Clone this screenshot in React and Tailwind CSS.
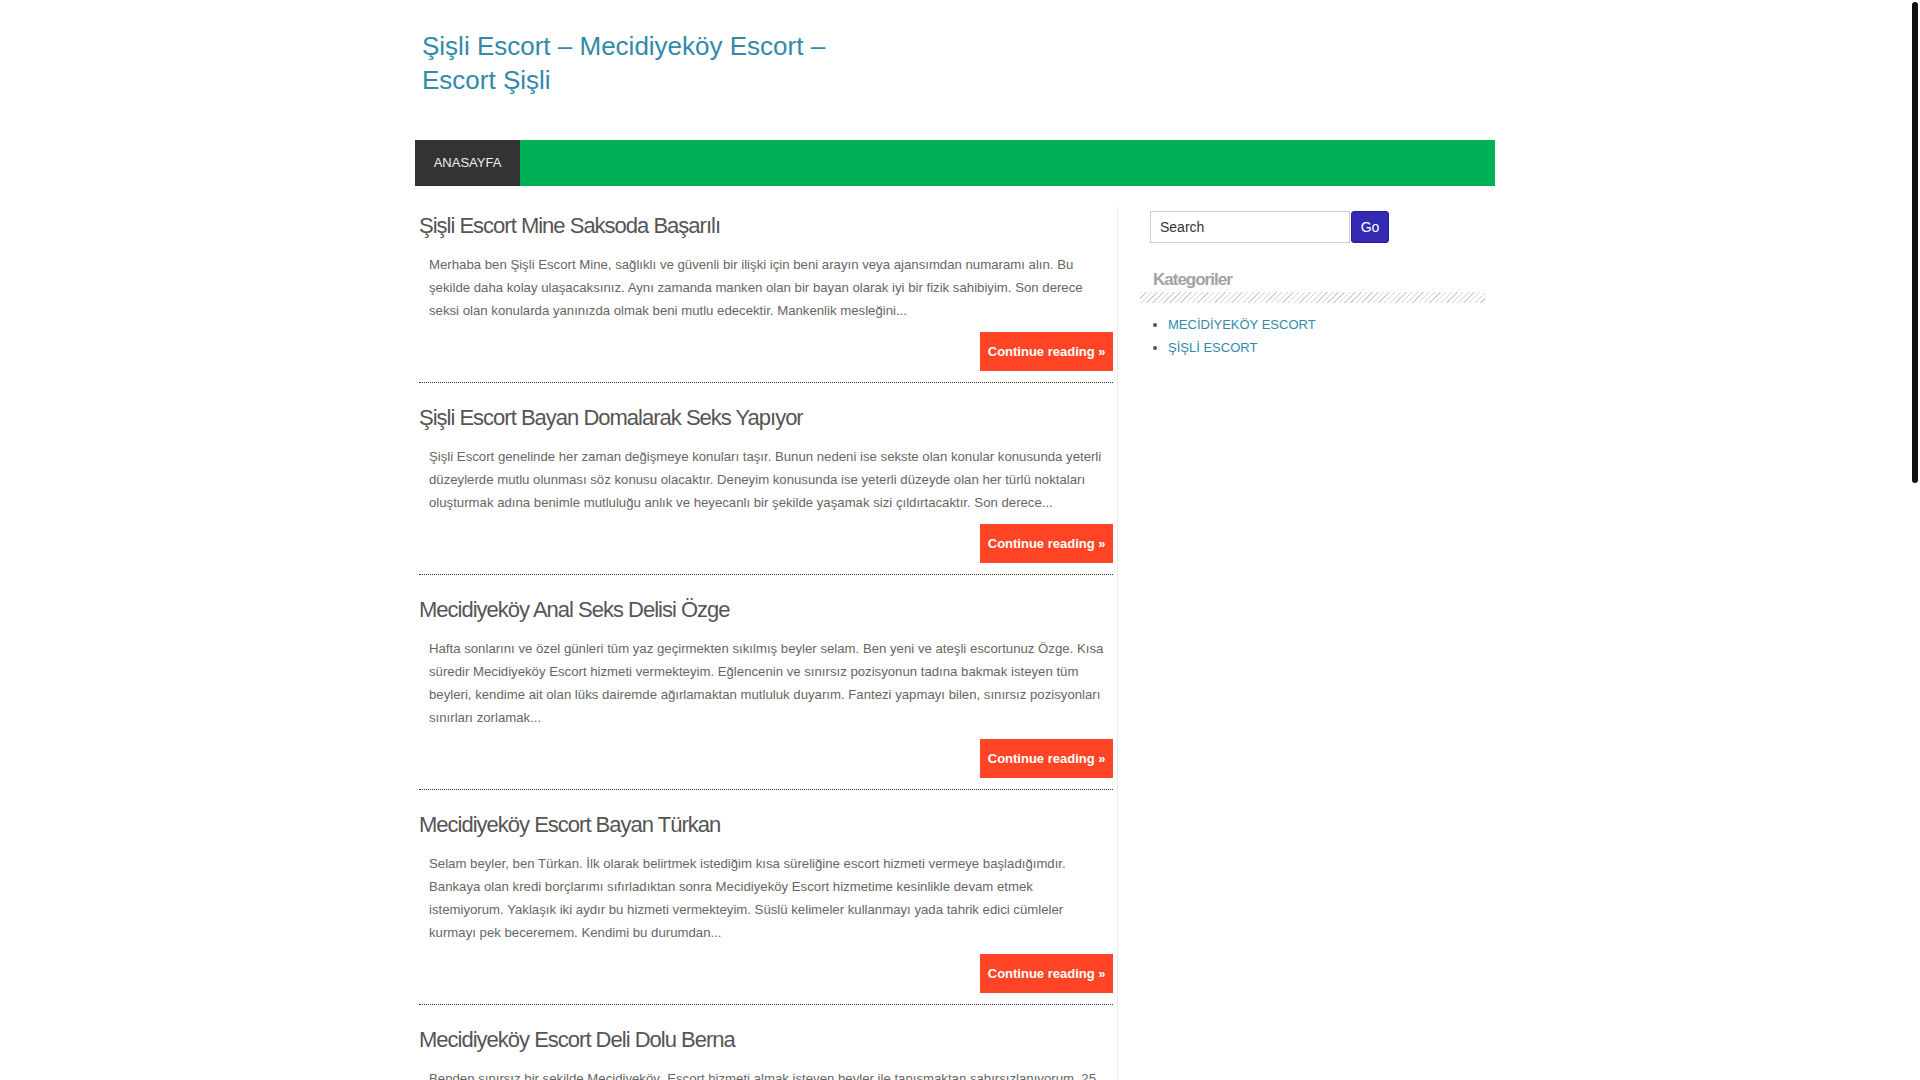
import React from "react";

const posts = [
  {
    title: "Şişli Escort Mine Saksoda Başarılı",
    text: "Merhaba ben Şişli Escort Mine, sağlıklı ve güvenli bir ilişki için beni arayın veya ajansımdan numaramı alın. Bu şekilde daha kolay ulaşacaksınız. Aynı zamanda manken olan bir bayan olarak iyi bir fizik sahibiyim. Son derece seksi olan konularda yanınızda olmak beni mutlu edecektir. Mankenlik mesleğini...",
  },
  {
    title: "Şişli Escort Bayan Domalarak Seks Yapıyor",
    text: "Şişli Escort genelinde her zaman değişmeye konuları taşır. Bunun nedeni ise sekste olan konular konusunda yeterli düzeylerde mutlu olunması söz konusu olacaktır. Deneyim konusunda ise yeterli düzeyde olan her türlü noktaları oluşturmak adına benimle mutluluğu anlık ve heyecanlı bir şekilde yaşamak sizi çıldırtacaktır. Son derece...",
  },
  {
    title: "Mecidiyeköy Anal Seks Delisi Özge",
    text: "Hafta sonlarını ve özel günleri tüm yaz geçirmekten sıkılmış beyler selam. Ben yeni ve ateşli escortunuz Özge. Kısa süredir Mecidiyeköy Escort hizmeti vermekteyim. Eğlencenin ve sınırsız pozisyonun tadına bakmak isteyen tüm beyleri, kendime ait olan lüks dairemde ağırlamaktan mutluluk duyarım. Fantezi yapmayı bilen, sınırsız pozisyonları sınırları zorlamak...",
  },
  {
    title: "Mecidiyeköy Escort Bayan Türkan",
    text: "Selam beyler, ben Türkan. İlk olarak belirtmek istediğim kısa süreliğine escort hizmeti vermeye başladığımdır. Bankaya olan kredi borçlarımı sıfırladıktan sonra Mecidiyeköy Escort hizmetime kesinlikle devam etmek istemiyorum. Yaklaşık iki aydır bu hizmeti vermekteyim. Süslü kelimeler kullanmayı yada tahrik edici cümleler kurmayı pek beceremem. Kendimi bu durumdan...",
  },
  {
    title: "Mecidiyeköy Escort Deli Dolu Berna",
    text: "Benden sınırsız bir şekilde Mecidiyeköy  Escort hizmeti almak isteyen beyler ile tanışmaktan sabırsızlanıyorum. 25 yaşında, uzun boylu ve son derece bakımlı bir bayanım. Sizlerle unutulmaz anlar yaşamak için sabırsızlanıyorum...",
  },
];

function Post({ title, text }) {
  return (
    <article className="mb-[20px]">
      <h2 className="text-[22px] leading-[30px] tracking-[-1px] text-[#555] font-normal">
        <a href="#">{title}</a>
      </h2>
      <p className="mt-[12px] pl-[10px] pr-[4px] text-[13.2px] leading-[23px] text-[#666] whitespace-pre-wrap">
        {text}
      </p>
      <div className="flex justify-end mt-[10px]">
        <a
          href="#"
          className="h-[39px] px-[7.5px] flex items-center bg-[#ff4526] text-white font-bold text-[13px]"
        >
          Continue reading »
        </a>
      </div>
      <div className="mt-[11px] border-b border-dotted border-[#333]" />
    </article>
  );
}

export default function App() {
  return (
    <div className="w-[1910px] min-h-[2425px] bg-white font-['Liberation_Sans',Arial,sans-serif]">
      <div className="w-[1080px] mx-auto">
        <header className="h-[140px] pt-[29px] pl-[7px]">
          <a
            href="#"
            className="block w-[440px] text-[26px] leading-[34px] text-[#328aa9]"
          >
            Şişli Escort – Mecidiyeköy Escort – Escort Şişli
          </a>
        </header>
        <nav className="h-[46px] bg-[#00b057] flex">
          <a
            href="#"
            className="bg-[#333333] w-[105px] flex items-center justify-center text-[13px] text-[#eeeeee]"
          >
            ANASAYFA
          </a>
        </nav>
        <div className="flex mt-[20px]">
          <main className="w-[703px] border-r border-[#eeeeee] pl-[4px] pr-[4px] pt-[5px]">
            {posts.map((p) => (
              <Post key={p.title} {...p} />
            ))}
          </main>
          <aside className="flex-1 pl-[22px] pr-[10px] pt-[5px]">
            <form className="flex ml-[10px]" onSubmit={(e) => e.preventDefault()}>
              <input
                type="text"
                defaultValue="Search"
                className="w-[200px] h-[32px] border border-[#cccccc] px-[9px] text-[14px] text-[#333] outline-none"
              />
              <button
                type="submit"
                className="w-[38px] h-[32px] ml-[1px] bg-[#3429b3] rounded-[3px] border border-[#2a2190] text-white text-[14px]"
              >
                Go
              </button>
            </form>
            <h3 className="mt-[26px] pl-[13px] text-[17px] leading-[22px] font-bold tracking-[-1px] text-[#a3a3a3]">
              Kategoriler
            </h3>
            <div className="mt-[1px] h-[11px] w-[345px] bg-[repeating-linear-gradient(135deg,#d4d4d4_0px,#d4d4d4_1px,transparent_1px,transparent_4px)]" />
            <ul className="mt-[10px]">
              {["MECİDİYEKÖY ESCORT", "ŞİŞLİ ESCORT"].map((c) => (
                <li key={c} className="flex items-center h-[23px] pl-[13px]">
                  <span className="w-[4px] h-[4px] rounded-full bg-[#555] mr-[11px]" />
                  <a href="#" className="text-[13px] text-[#328aa9]">
                    {c}
                  </a>
                </li>
              ))}
            </ul>
          </aside>
        </div>
      </div>
      <div className="fixed top-[2px] right-[2px] w-[6px] h-[481px] rounded-full bg-[#111]" />
    </div>
  );
}
